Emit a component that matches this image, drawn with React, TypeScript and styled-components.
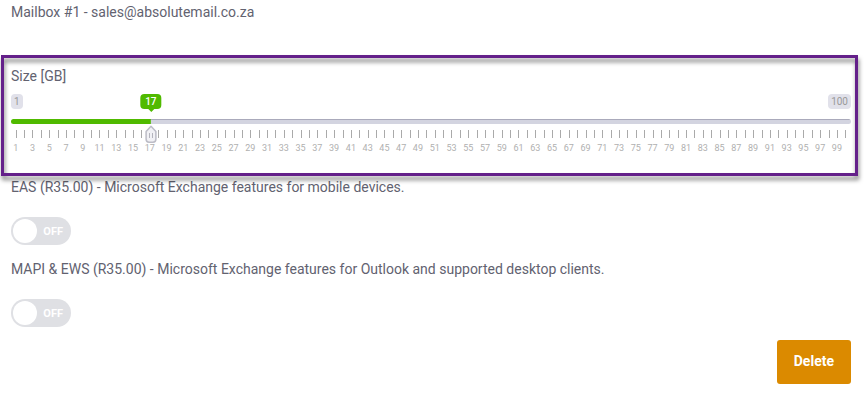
import React, { useId, useState } from "react";
import styled, { createGlobalStyle } from "styled-components";

const GlobalStyle = createGlobalStyle`
  * { box-sizing: border-box; }
  body {
    margin: 0;
    background: #fff;
    color: #626270;
    font-family: Roboto, "Liberation Sans", sans-serif;
    font-size: 14px;
    line-height: 20px;
  }
`;

const MIN = 1;
const MAX = 100;

const Page = styled.main`
  display: flex;
  flex-direction: column;
  padding: 2px 15px 20px 11px;
`;

const Title = styled.h1`
  margin: 0 0 44px;
  font-size: 14px;
  font-weight: 400;
  line-height: 20px;
`;

const SizeField = styled.section`
  position: relative;
  display: flex;
  flex-direction: column;
  margin-bottom: 23px;

  &::after {
    content: "";
    position: absolute;
    inset: -11px -7px -22px -10px;
    border: 3px solid #64208a;
    filter: drop-shadow(1px 4px 2px rgba(0, 0, 0, 0.5));
    pointer-events: none;
  }
`;

const Badges = styled.div`
  position: relative;
  display: flex;
  justify-content: space-between;
  margin-top: 8px;
`;

const Badge = styled.span`
  padding: 0 3px;
  border-radius: 4px;
  background: #e1e1ea;
  color: #999;
  font-size: 10px;
  line-height: 15px;
`;

const atValue = "calc((100% - 12px) * var(--ratio) + 6px)";

const ValueBadge = styled.output`
  position: absolute;
  left: ${atValue};
  transform: translateX(-50%);
  padding: 0 5px;
  border-radius: 4px;
  background: #50ba00;
  color: #fff;
  font-size: 10px;
  font-weight: 500;
  line-height: 15px;

  &::after {
    content: "";
    position: absolute;
    top: 100%;
    left: 50%;
    margin-left: -3px;
    border: 3px solid transparent;
    border-top-color: #50ba00;
    border-bottom: 0;
  }
`;

const Slider = styled.div`
  position: relative;
  display: flex;
  flex-direction: column;
  margin-top: 10px;
`;

const Range = styled.input`
  appearance: none;
  width: 100%;
  height: 5px;
  margin: 0;
  border-radius: 3px;
  background:
    linear-gradient(#50ba00, #50ba00) 0 0 / ${atValue} 100% no-repeat,
    linear-gradient(#aaaabb 1px, #d3d4e0 1px);
  cursor: pointer;

  &::-webkit-slider-thumb {
    appearance: none;
    width: 12px;
    height: 24px;
    background: transparent;
  }

  &:focus-visible { outline: 1px solid #64208a; outline-offset: 3px; }
`;

const Handle = styled.svg`
  position: absolute;
  top: 6px;
  left: ${atValue};
  margin-left: -6px;
  width: 12px;
  height: 18px;
  pointer-events: none;
`;

const Scale = styled.div`
  display: grid;
  grid-template-columns: repeat(100, minmax(0, 1fr));
  grid-template-rows: 8px 12px;
  row-gap: 4px;
  margin: 6px 1px 0;
`;

const Tick = styled.span`
  grid-row: 1;
  justify-self: center;
  width: 1px;
  background: #aaa;
`;

const TickLabel = styled.span<{ $column: number }>`
  grid-row: 2;
  grid-column: ${(p) => p.$column};
  justify-self: center;
  padding-right: 1px;
  color: #b0b0b0;
  font-size: 9px;
  line-height: 12px;
`;

const Option = styled.div`
  display: flex;
  flex-direction: column;
  align-items: flex-start;
  gap: 20px;
  margin-bottom: 14px;

  &:last-of-type { margin-bottom: 13px; }
`;

const Switch = styled.label`
  position: relative;
  display: flex;
  align-items: center;
  justify-content: flex-end;
  width: 60px;
  height: 28px;
  padding: 2px 8px 1px;
  border-radius: 14px;
  background: #dfe0e4;
  color: #fff;
  font-size: 11px;
  font-weight: 700;
  cursor: pointer;

  &::before {
    content: "";
    position: absolute;
    top: 2px;
    left: 2px;
    width: 24px;
    height: 24px;
    border-radius: 50%;
    background: #fff;
  }

  &:has(:checked) { justify-content: flex-start; background: #50ba00; }
  &:has(:checked)::before { left: auto; right: 2px; }
`;

const SwitchInput = styled.input`
  position: absolute;
  inset: 0;
  width: 100%;
  height: 100%;
  margin: 0;
  opacity: 0;
  cursor: pointer;
`;

const DeleteButton = styled.button`
  align-self: flex-end;
  height: 44px;
  padding: 0 17px 2px;
  border: 0;
  border-radius: 3px;
  background: #db8a00;
  color: #fff;
  font: 700 14px/20px Roboto, "Liberation Sans", sans-serif;
  cursor: pointer;
`;

function SizeSlider() {
  const id = useId();
  const [value, setValue] = useState(17);
  const ratio = (value - MIN) / (MAX - MIN);
  const steps = Array.from({ length: MAX }, (_, i) => i + 1);

  return (
    <SizeField style={{ "--ratio": ratio } as React.CSSProperties}>
      <label htmlFor={id}>Size [GB]</label>
      <Badges>
        <Badge>{MIN}</Badge>
        <ValueBadge htmlFor={id}>{value}</ValueBadge>
        <Badge>{MAX}</Badge>
      </Badges>
      <Slider>
        <Range
          id={id}
          type="range"
          min={MIN}
          max={MAX}
          value={value}
          onChange={(e) => setValue(Number(e.target.value))}
        />
        <Scale aria-hidden="true">
          {steps.map((n) => (
            <Tick key={n} />
          ))}
          {steps
            .filter((n) => n % 2 === 1)
            .map((n) => (
              <TickLabel key={n} $column={n}>
                {n}
              </TickLabel>
            ))}
        </Scale>
        <Handle viewBox="0 0 12 18" aria-hidden="true">
          <path
            d="M6 1.2 L10.9 6.5 V14 Q10.9 17.2 8 17.2 H4 Q1.1 17.2 1.1 14 V6.5 Z"
            fill="#f1f1f5"
            stroke="#bcbcc6"
            strokeWidth="1.5"
            strokeLinejoin="round"
          />
          <path d="M4.5 8 V13 M7.5 8 V13" stroke="#b4b4bd" strokeWidth="1" />
        </Handle>
      </Slider>
    </SizeField>
  );
}

function OptionSwitch({ label }: { label: string }) {
  const id = useId();
  const [on, setOn] = useState(false);
  return (
    <Option>
      <label htmlFor={id}>{label}</label>
      <Switch>
        <SwitchInput id={id} type="checkbox" role="switch" checked={on} onChange={() => setOn(!on)} />
        {on ? "ON" : "OFF"}
      </Switch>
    </Option>
  );
}

export default function App() {
  return (
    <>
      <GlobalStyle />
      <Page>
        <Title>Mailbox #1 - sales@absolutemail.co.za</Title>
        <SizeSlider />
        <OptionSwitch label="EAS (R35.00) - Microsoft Exchange features for mobile devices." />
        <OptionSwitch label="MAPI & EWS (R35.00) - Microsoft Exchange features for Outlook and supported desktop clients." />
        <DeleteButton type="button">Delete</DeleteButton>
      </Page>
    </>
  );
}
